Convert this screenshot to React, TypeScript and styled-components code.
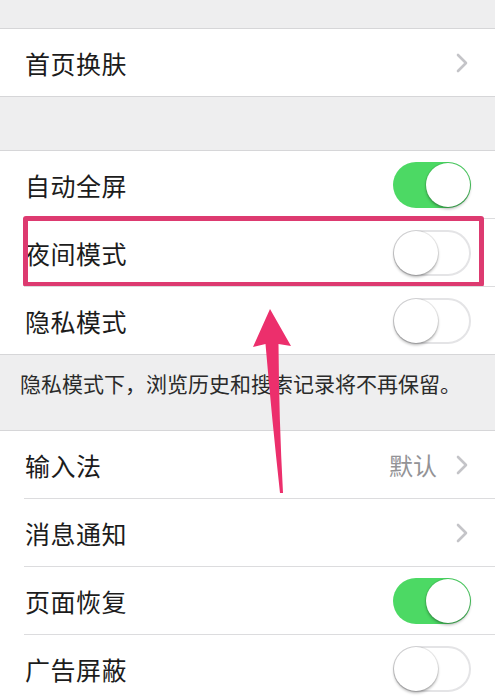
import React from "react";
import styled, { createGlobalStyle } from "styled-components";

const GlobalStyle = createGlobalStyle`
  html, body {
    margin: 0;
    padding: 0;
    background: #ffffff;
  }
  body {
    font-family: "Noto Sans CJK SC", "Noto Sans", sans-serif;
  }
`;

type Item =
  | { label: string; kind: "link"; value?: string }
  | { label: string; kind: "toggle"; on: boolean; marked?: boolean };

const sections: { gapBefore: number; items: Item[]; note?: string }[] = [
  {
    gapBefore: 28,
    items: [{ label: "首页换肤", kind: "link" }],
  },
  {
    gapBefore: 53,
    items: [
      { label: "自动全屏", kind: "toggle", on: true },
      { label: "夜间模式", kind: "toggle", on: false, marked: true },
      { label: "隐私模式", kind: "toggle", on: false },
    ],
    note: "隐私模式下，浏览历史和搜索记录将不再保留。",
  },
  {
    gapBefore: 0,
    items: [
      { label: "输入法", kind: "link", value: "默认" },
      { label: "消息通知", kind: "link" },
      { label: "页面恢复", kind: "toggle", on: true },
      { label: "广告屏蔽", kind: "toggle", on: false },
    ],
  },
];

export default function App() {
  return (
    <Page>
      <GlobalStyle />
      {sections.map((section, si) => (
        <React.Fragment key={si}>
          {section.gapBefore > 0 && <Gap h={section.gapBefore} />}
          <Group>
            {section.items.map((item, i) => (
              <Row key={item.label}>
                <RowInner first={i === 0}>
                  <Label>{item.label}</Label>
                  {item.kind === "link" ? (
                    <Accessory>
                      {item.value && <Value>{item.value}</Value>}
                      <Chevron />
                    </Accessory>
                  ) : (
                    <Toggle on={item.on}>
                      <Knob on={item.on} />
                    </Toggle>
                  )}
                </RowInner>
                {item.kind === "toggle" && item.marked && <MarkBox />}
              </Row>
            ))}
          </Group>
          {section.note && <Note>{section.note}</Note>}
        </React.Fragment>
      ))}
      <Arrow />
    </Page>
  );
}

function Chevron() {
  return (
    <svg width="14" height="20" viewBox="0 0 14 20">
      <path
        d="M3 2 L11 10 L3 18"
        fill="none"
        stroke="#c4c4c8"
        strokeWidth="2.6"
        strokeLinecap="round"
        strokeLinejoin="round"
      />
    </svg>
  );
}

function Arrow() {
  return (
    <ArrowSvg width="500" height="700" viewBox="0 0 500 700">
      <path
        d="M270 309 L291 346 L278.5 344 Q279 420 283 493 L280 493 Q272 420 265.5 344 L253 347 Z"
        fill="#ec2f6c"
      />
    </ArrowSvg>
  );
}

const Page = styled.div`
  position: relative;
  width: 495px;
  height: 700px;
  overflow: hidden;
  background: #efeff0;
`;

const Gap = styled.div<{ h: number }>`
  height: ${(p) => p.h}px;
  background: #eeeeef;
  border-bottom: 1px solid #d6d6d8;
`;

const Group = styled.div`
  background: #ffffff;
  border-bottom: 1px solid #d6d6d8;
`;

const Row = styled.div`
  position: relative;
  padding-left: 24px;
  background: #ffffff;
`;

const RowInner = styled.div<{ first: boolean }>`
  height: 67px;
  display: flex;
  align-items: center;
  justify-content: space-between;
  padding-right: 24px;
  border-top: ${(p) => (p.first ? "none" : "1px solid #dcdcde")};
`;

const Label = styled.span`
  font-size: 25px;
  color: #1c1c1c;
  letter-spacing: 0.5px;
  padding-left: 1px;
`;

const Accessory = styled.div`
  display: flex;
  align-items: center;
  gap: 18px;
  padding-right: 2px;
`;

const Value = styled.span`
  font-size: 24px;
  color: #939396;
`;

const Toggle = styled.div<{ on: boolean }>`
  position: relative;
  width: 78px;
  height: 46px;
  box-sizing: border-box;
  border-radius: 23px;
  background: ${(p) => (p.on ? "#4cd964" : "#ffffff")};
  border: ${(p) => (p.on ? "none" : "2px solid #e4e4e6")};
`;

const Knob = styled.div<{ on: boolean }>`
  position: absolute;
  top: ${(p) => (p.on ? "1px" : "-1px")};
  left: ${(p) => (p.on ? "33px" : "-1px")};
  width: 44px;
  height: 44px;
  border-radius: 50%;
  background: #ffffff;
  box-shadow: 0 2px 3px rgba(0, 0, 0, 0.3), 0 0 0 1px rgba(0, 0, 0, 0.08);
`;

const MarkBox = styled.div`
  position: absolute;
  left: 23px;
  right: 11px;
  top: -2px;
  bottom: -1px;
  border: 5px solid #dd3a70;
  border-radius: 3px;
  pointer-events: none;
`;

const Note = styled.div`
  height: 76px;
  box-sizing: border-box;
  padding: 13px 0 0 20px;
  font-size: 21px;
  color: #2a2a2a;
  background: #eeeeef;
  border-bottom: 1px solid #d6d6d8;
`;

const ArrowSvg = styled.svg`
  position: absolute;
  left: 0;
  top: 0;
  pointer-events: none;
`;
